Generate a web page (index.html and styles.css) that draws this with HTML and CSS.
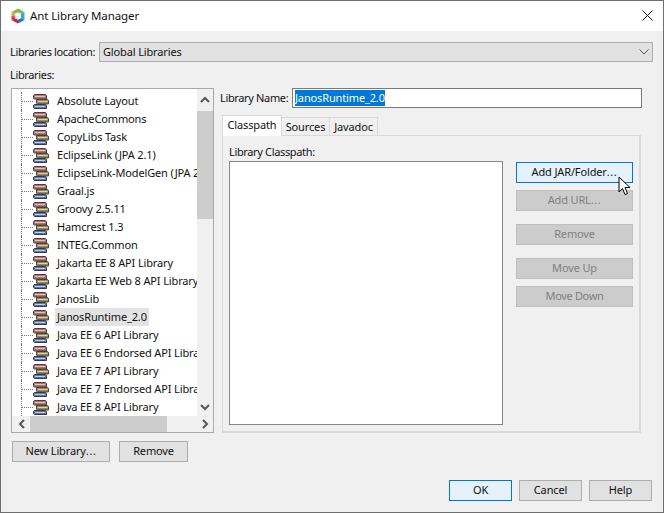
FILE: index.html
```html
<!DOCTYPE html>
<html lang="en">
<head>
<meta charset="utf-8">
<title>Ant Library Manager</title>
<link rel="stylesheet" href="styles.css">
</head>
<body>
<svg class="defs" width="0" height="0">
  <symbol id="books" viewBox="0 0 17 15">
    <path d="M1.500.5h11l1 1v3.500H1.500L.5 4.500v-3z" fill="#ab7878" stroke="#553a3a"/>
    <path d="M2 2.500h10" stroke="#dcc2c2"/>
    <path d="M3.500 5.500h11l1 1v3.500H4.500l-1-1v-3z" fill="#958b5e" stroke="#474229"/>
    <path d="M4.500 7.500h10" stroke="#d8d2b2"/>
    <path d="M1.500 10.500h11l1 1v3H1.500l-1-1v-2z" fill="#63739f" stroke="#323a5c"/>
    <path d="M2 12.500h10" stroke="#c8cfe4"/>
  </symbol>
</svg>
<div class="window">
  <header class="titlebar">
    <svg class="logo" width="16" height="16" viewBox="0 0 16 16">
      <path d="M8 .5L14.500 4 11 6 8 4.500 5 6 1.500 4z" fill="#7fbf4d"/>
      <path d="M1.500 4L5 6v2.500L1.500 8z" fill="#d9a93f"/>
      <path d="M1.500 8L5 8.500V10l-3.500 2z" fill="#d92a5c"/>
      <path d="M14.500 4L11 6v4l3.500 2z" fill="#35a7de"/>
      <path d="M1.500 12L5 10l3 1.500v4z" fill="#d81f4e"/>
      <path d="M14.500 12L11 10l-3 1.500v4z" fill="#2477c9"/>
      <path d="M8 4.500l3 1.500v4l-3 1.500L5 10V6z" fill="#fff"/>
      <path d="M8 8v3.500L5 10V6z" fill="#e8eef2"/>
    </svg>
    <span class="title">Ant Library Manager</span>
    <svg class="close" width="11" height="11" viewBox="0 0 11 11"><path d="M.5.5l10 10M10.500.5l-10 10" stroke="#111" fill="none"/></svg>
  </header>
  <main class="content">
    <div class="location">
      <label class="location-label tight">Libraries location:</label>
      <div class="combo">
        <span class="combo-text">Global Libraries</span>
        <svg width="10" height="6" viewBox="0 0 10 6"><path d="M.5.5L5 5 9.500.5" stroke="#555" fill="none"/></svg>
      </div>
    </div>
    <div class="libs-label tight">Libraries:</div>
    <div class="columns">
      <div class="left">
        <div class="tree-frame">
          <div class="tree-top">
            <ul class="tree">
              <li class="row"><span class="dots"></span><svg class="book"><use href="#books"/></svg><span class="name">Absolute Layout</span></li>
              <li class="row"><span class="dots"></span><svg class="book"><use href="#books"/></svg><span class="name">ApacheCommons</span></li>
              <li class="row"><span class="dots"></span><svg class="book"><use href="#books"/></svg><span class="name">CopyLibs Task</span></li>
              <li class="row"><span class="dots"></span><svg class="book"><use href="#books"/></svg><span class="name">EclipseLink (JPA 2.1)</span></li>
              <li class="row"><span class="dots"></span><svg class="book"><use href="#books"/></svg><span class="name">EclipseLink-ModelGen (JPA 2.1)</span></li>
              <li class="row"><span class="dots"></span><svg class="book"><use href="#books"/></svg><span class="name">Graal.js</span></li>
              <li class="row"><span class="dots"></span><svg class="book"><use href="#books"/></svg><span class="name">Groovy 2.5.11</span></li>
              <li class="row"><span class="dots"></span><svg class="book"><use href="#books"/></svg><span class="name">Hamcrest 1.3</span></li>
              <li class="row"><span class="dots"></span><svg class="book"><use href="#books"/></svg><span class="name">INTEG.Common</span></li>
              <li class="row"><span class="dots"></span><svg class="book"><use href="#books"/></svg><span class="name">Jakarta EE 8 API Library</span></li>
              <li class="row"><span class="dots"></span><svg class="book"><use href="#books"/></svg><span class="name">Jakarta EE Web 8 API Library</span></li>
              <li class="row"><span class="dots"></span><svg class="book"><use href="#books"/></svg><span class="name">JanosLib</span></li>
              <li class="row"><span class="dots"></span><svg class="book"><use href="#books"/></svg><span class="name selected">JanosRuntime_2.0</span></li>
              <li class="row"><span class="dots"></span><svg class="book"><use href="#books"/></svg><span class="name">Java EE 6 API Library</span></li>
              <li class="row"><span class="dots"></span><svg class="book"><use href="#books"/></svg><span class="name">Java EE 6 Endorsed API Library</span></li>
              <li class="row"><span class="dots"></span><svg class="book"><use href="#books"/></svg><span class="name">Java EE 7 API Library</span></li>
              <li class="row"><span class="dots"></span><svg class="book"><use href="#books"/></svg><span class="name">Java EE 7 Endorsed API Library</span></li>
              <li class="row"><span class="dots"></span><svg class="book"><use href="#books"/></svg><span class="name">Java EE 8 API Library</span></li>
            </ul>
            <div class="vscroll">
              <svg class="arrow" width="16" height="22" viewBox="0 0 16 22"><path d="M4 13l4-4 4 4" stroke="#555" stroke-width="2" fill="none"/></svg>
              <div class="vthumb"></div>
              <div class="vtrack"></div>
              <svg class="arrow" width="16" height="16" viewBox="0 0 16 16"><path d="M4 5l4 4 4-4" stroke="#555" stroke-width="2" fill="none"/></svg>
            </div>
          </div>
          <div class="hscroll">
            <svg width="18" height="16" viewBox="0 0 18 16"><path d="M12 4L8 8l4 4" stroke="#555" stroke-width="2" fill="none"/></svg>
            <div class="hthumb"></div>
            <div class="htrack"></div>
            <svg width="16" height="16" viewBox="0 0 16 16"><path d="M6 4l4 4-4 4" stroke="#555" stroke-width="2" fill="none"/></svg>
          </div>
        </div>
        <div class="left-buttons">
          <button class="btn new-lib">New Library<span class="ell">...</span></button>
          <button class="btn remove-lib">Remove</button>
        </div>
      </div>
      <div class="right">
        <div class="name-row">
          <label class="tight">Library Name:</label>
          <div class="name-field"><span class="sel-text">JanosRuntime_2.0</span></div>
        </div>
        <div class="tabs">
          <div class="tab active">Classpath</div>
          <div class="tab">Sources</div>
          <div class="tab">Javadoc</div>
        </div>
        <div class="tab-panel">
          <div class="cp-label tight">Library Classpath:</div>
          <div class="cp-body">
            <div class="cp-list"></div>
            <div class="cp-buttons">
              <button class="btn side focus">Add JAR/Folder<span class="ell">...</span></button>
              <button class="btn side disabled">Add URL<span class="ell">...</span></button>
              <button class="btn side disabled gap">Remove</button>
              <button class="btn side disabled gap">Move Up</button>
              <button class="btn side disabled tight">Move Down</button>
            </div>
          </div>
        </div>
      </div>
    </div>
    <footer class="footer">
      <button class="btn foot focus-ok">OK</button>
      <button class="btn foot">Cancel</button>
      <button class="btn foot">Help</button>
    </footer>
  </main>
  <svg class="cursor" width="13" height="20" viewBox="0 0 13 20"><path d="M1 1v15l3.500-3.500 2.500 6 2.500-1-2.500-6h5z" fill="#fff" stroke="#000"/></svg>
</div>
</body>
</html>
```

FILE: styles.css
```css
* { box-sizing: border-box; }
html, body { margin: 0; padding: 0; }
body {
  width: 664px;
  height: 513px;
  overflow: hidden;
  font-family: "Noto Sans", sans-serif;
  font-size: 11px;
  letter-spacing: -0.14px;
  white-space: nowrap;
  color: #111;
  background: #f0f0f0;
}
.defs { position: absolute; }
.tight { letter-spacing: -0.35px; }
.ell { letter-spacing: 0.6px; }
.window {
  position: relative;
  width: 664px;
  height: 513px;
  border: 1px solid #6e6e6e;
  display: flex;
  flex-direction: column;
  background: #f0f0f0;
}
.titlebar {
  height: 30px;
  flex: none;
  background: #fff;
  display: flex;
  align-items: center;
  padding: 0 10px 1px 9px;
}
.logo { flex: none; }
.title { margin-left: 4px; font-size: 11.5px; letter-spacing: -0.1px; flex: 1; }
.content {
  flex: 1;
  display: flex;
  flex-direction: column;
  padding: 11px 10px 11px 9px;
}
.location { display: flex; align-items: center; height: 20px; }
.location-label { width: 89px; padding-bottom: 1px; }
.combo {
  flex: 1;
  height: 20px;
  display: flex;
  align-items: center;
  justify-content: space-between;
  padding: 0 3px 0 3px;
  background: #e1e1e1;
  border: 1px solid #adadad;
}
.combo-text { padding-bottom: 1px; }
.libs-label { height: 16px; margin-top: 5px; line-height: 16px; }
.columns { display: flex; height: 374px; margin-top: 5px; }
.left { width: 204px; margin-left: 1px; display: flex; flex-direction: column; }
.tree-frame {
  width: 203px;
  height: 345px;
  border: 1px solid #a9a9a9;
  background: #fff;
  display: flex;
  flex-direction: column;
}
.tree-top { display: flex; height: 327px; }
.tree {
  list-style: none;
  margin: 0;
  padding: 3px 0 0 9px;
  width: 185px;
  overflow: hidden;
}
.row { height: 18px; display: flex; align-items: center; white-space: nowrap; }
.dots { width: 12px; height: 18px; flex: none; border-left: 1px dotted #777; }
.dots::after { content: ""; display: block; margin-top: 9px; border-top: 1px dotted #777; }
.book { width: 17px; height: 15px; flex: none; }
.name { margin-left: 5px; padding: 0 2px; line-height: 18px; margin-right: -2px; }
.selected { background: #e3e3e3; }
.vscroll { width: 16px; display: flex; flex-direction: column; background: #f0f0f0; }
.arrow { flex: none; display: block; }
.vthumb { height: 108px; background: #cdcdcd; flex: none; }
.vtrack { flex: 1; }
.hscroll { height: 16px; display: flex; background: #f0f0f0; width: 201px; }
.hthumb { width: 137px; background: #cdcdcd; flex: none; }
.htrack { flex: 1; }
.left-buttons { display: flex; margin-top: 8px; margin-left: 1px; gap: 9px; }
.btn {
  font-family: inherit;
  font-size: 11px;
  color: #111;
  height: 21px;
  padding: 0 0 2px;
  letter-spacing: -0.14px;
  background: #e1e1e1;
  border: 1px solid #adadad;
}
.new-lib { width: 98px; }
.remove-lib { width: 69px; }
.right { margin-left: 5px; width: 422px; display: flex; flex-direction: column; }
.name-row { display: flex; align-items: center; height: 20px; }
.name-row label { width: 72px; flex: none; padding-bottom: 1px; }
.name-field {
  width: 350px;
  height: 20px;
  border: 1px solid #7a7a7a;
  background: #fff;
  padding-left: 2px;
  line-height: 17px;
}
.sel-text { display: inline-block; background: #0078d7; color: #fff; height: 16px; line-height: 16px; vertical-align: top; margin-top: 1px; }
.tabs { display: flex; margin-top: 7px; margin-left: 2px; height: 20px; align-items: flex-end; }
.tab {
  width: 48px;
  height: 18px;
  text-align: center;
  line-height: 17px;
  background: #f0f0f0;
  border: 1px solid #d9d9d9;
  border-bottom: 0;
  border-left: 0;
}
.tab.active {
  width: 60px;
  background: #fff;
  border-left: 1px solid #d9d9d9;
  margin-bottom: -1px;
  height: 21px;
  line-height: 18px;
  position: relative;
}
.tab-panel {
  margin-left: 2px;
  width: 419px;
  height: 298px;
  border: 1px solid #d9d9d9;
  border-width: 1px 2px 2px 1px;
  padding: 8px 7px 0 6px;
}
.cp-label { height: 17px; line-height: 16px; }
.cp-body { display: flex; }
.cp-list { width: 274px; height: 264px; background: #fff; border: 1px solid #828790; flex: none; }
.cp-buttons { margin-left: 13px; display: flex; flex-direction: column; gap: 7px; padding-top: 1px; }
.side { width: 117px; }
.side.gap { margin-top: 6px; }
.btn.focus { background: #e5f1fb; border-color: #0078d7; }
.btn.disabled { background: #cccccc; border-color: #bfbfbf; color: #7f7f7f; }
.btn.tight { letter-spacing: -0.35px; }
.footer { display: flex; justify-content: flex-end; gap: 7px; margin-top: auto; margin-right: 1px; }
.foot { width: 63px; }
.focus-ok { background: #e5f1fb; border-color: #0078d7; }
.cursor { position: absolute; left: 617px; top: 175px; }
```
